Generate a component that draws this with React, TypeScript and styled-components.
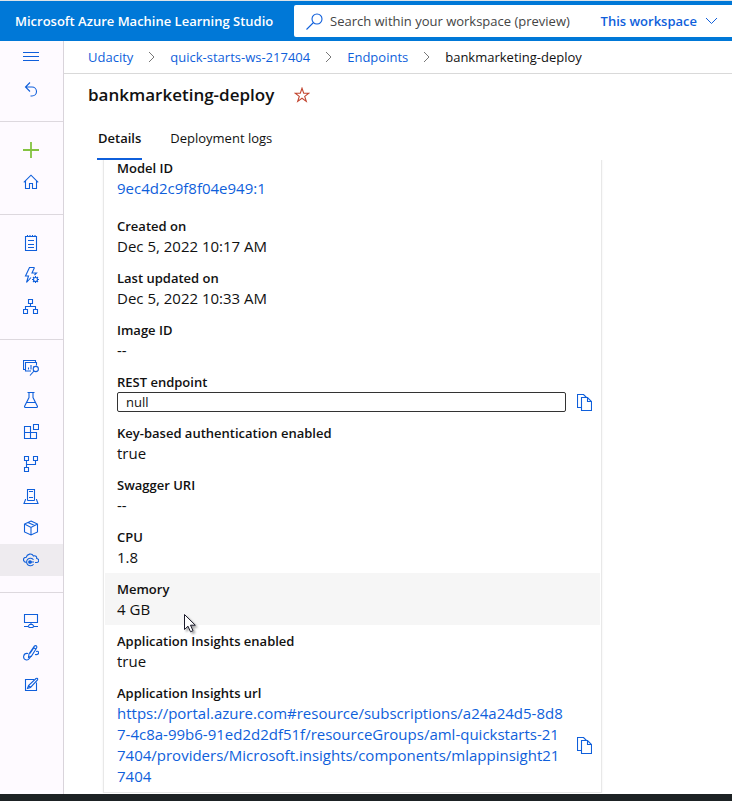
import React from "react";
import styled, { createGlobalStyle } from "styled-components";

const BLUE = "#0f5fdb";

const GlobalStyle = createGlobalStyle`
  *, *::before, *::after { box-sizing: border-box; }
  body {
    margin: 0;
    background: #fff;
    color: #111;
    font-family: "Open Sans", "Noto Sans", sans-serif;
    font-size: 13px;
    line-height: 20px;
  }
  button, input, select { font: inherit; color: inherit; }
  button { padding: 0; border: 0; background: none; cursor: pointer; }
  a { color: ${BLUE}; text-decoration: none; }
`;

const Page = styled.div`
  display: flex;
  flex-direction: column;
  min-height: 100vh;
`;

const Header = styled.header`
  display: flex;
  align-items: center;
  height: 41px;
  padding-left: 15px;
  border-top: 1px solid #dde3e8;
  background: #0078d7;
`;

const Brand = styled.span`
  flex: none;
  width: 279px;
  color: #fff;
  font-size: 13px;
  font-weight: 600;
  white-space: nowrap;
`;

const SearchBox = styled.div`
  display: flex;
  flex: 1;
  align-items: center;
  height: 32px;
  padding: 0 14px 0 12px;
  border-radius: 2px 0 0 2px;
  background: #fff;
`;

const SearchInput = styled.input`
  flex: 1;
  min-width: 0;
  margin-left: 7px;
  padding: 0;
  border: 0;
  outline: 0;
  background: none;
  &::placeholder { color: #444; opacity: 1; }
`;

const ScopeButton = styled.button`
  display: flex;
  align-items: center;
  gap: 8px;
  color: ${BLUE};
  font-weight: 600;
  white-space: nowrap;
`;

const Body = styled.div`
  display: flex;
  flex: 1;
`;

const Sidebar = styled.nav`
  flex: none;
  width: 64px;
  border-right: 1px solid #d9d4db;
  background: #fefaff;
`;

const NavGroup = styled.div`
  padding: 12px 0 16px;
  border-bottom: 1px solid #ddd8de;
  &:first-child { padding-top: 0; }
  &:last-child { border-bottom: 0; }
`;

const NavButton = styled.button<{ $active?: boolean }>`
  display: flex;
  align-items: center;
  width: 100%;
  height: 32px;
  padding-left: 23px;
  background: ${(p) => (p.$active ? "#eeebef" : "transparent")};
`;

const Main = styled.main`
  flex: 1;
  min-width: 0;
`;

const Breadcrumbs = styled.nav`
  display: flex;
  align-items: center;
  gap: 15px;
  height: 33px;
  padding-left: 24px;
  border-bottom: 1px solid #d9d9d9;
  white-space: nowrap;
`;

const TitleRow = styled.div`
  display: flex;
  align-items: center;
  gap: 20px;
  height: 44px;
  padding: 0 24px 2px;
`;

const Title = styled.h1`
  margin: 0;
  font-size: 17px;
  font-weight: 600;
  line-height: 24px;
`;

const Tabs = styled.div`
  display: flex;
  gap: 27px;
  height: 42px;
  padding-left: 33px;
`;

const Tab = styled.button<{ $active?: boolean }>`
  padding: 0 1px;
  border-bottom: 2px solid ${(p) => (p.$active ? BLUE : "transparent")};
  font-weight: ${(p) => (p.$active ? 600 : 400)};
`;

const ScrollArea = styled.div`
  overflow: hidden;
  padding: 0 24px 0 39px;
`;

const Card = styled.dl`
  max-width: 499px;
  margin: -9px 0 0;
  padding: 0 1px;
  border: 1px solid #e8e8e8;
  box-shadow: 0 0 2px #eee;
`;

const Row = styled.div<{ $hover?: boolean; $spaced?: boolean }>`
  position: relative;
  padding: 6px 8px 5px 12px;
  margin-bottom: ${(p) => (p.$spaced ? 6 : 0)}px;
  background: ${(p) => (p.$hover ? "#f6f6f6" : "transparent")};
`;

const Label = styled.dt`
  font-weight: 600;
`;

const Value = styled.dd`
  display: flex;
  align-items: center;
  gap: 11px;
  margin: 0;
  font-size: 15px;
  line-height: 21px;
`;

const UrlLink = styled.a`
  flex: 1;
  min-width: 0;
  word-break: break-all;
`;

const EndpointInput = styled.input`
  flex: 1;
  min-width: 0;
  height: 20px;
  padding: 0 8px;
  border: 1px solid #333;
  border-radius: 2px;
  background: #fff;
  font-size: 13px;
  outline: 0;
`;

const CopyButton = styled.button`
  display: flex;
  flex: none;
  width: 15px;
`;

const Pointer = styled.svg`
  position: absolute;
  top: 40px;
  left: 78px;
  pointer-events: none;
  filter: drop-shadow(2px 2px 1px rgba(0, 0, 0, 0.35));
`;

const BottomBar = styled.footer`
  height: 7px;
  background: #1d2224;
`;

const Glyph = styled.svg`
  display: block;
  flex: none;
  fill: none;
  stroke: ${BLUE};
  stroke-width: 1.1;
`;

const Icon = ({ children }: { children: React.ReactNode }) => (
  <Glyph width="16" height="16" viewBox="0 0 16 16" aria-hidden="true">
    {children}
  </Glyph>
);

const icons = {
  menu: <path d="M0 3.5h16M0 7.5h16M0 11.5h16" />,
  undo: <path d="M7 1.5 2.5 6 7 10.5M2.5 6H9a4.500 4.500 0 0 1 0 9H7.500" />,
  plus: <path stroke="#84c341" strokeWidth="1.800" d="M8 0v16M0 8h16" />,
  home: <path d="M.8 8.300 8 1.200l7.200 7.100M2.500 7v7.500h4v-5h3v5h4V7" />,
  notes: (
    <>
      <path d="M2.500 1.500h11v14h-11zM5 5.500h6M5 9.500h6M5 12.500h6" />
      <path d="M4.500 0v2M7 0v2M9.500 0v2M12 0v2" />
    </>
  ),
  automl: (
    <>
      <path d="M11.500.5h-5L2.500 9h3l-2 6.500 4.500-5M11.500.5 9 6h4.500l-2 2" />
      <circle cx="12.500" cy="12.500" r="2" />
      <path d="M12.500 9v1.500M12.500 14.500V16M9 12.500h1.500M14.500 12.500H16M10 10l1 1M14 14l1 1M15 10l-1 1M11 14l-1 1" />
    </>
  ),
  designer: (
    <path d="M5.500.5h4v4h-4zM.5 10.500h4v4h-4zM10.500 10.500h4v4h-4zM7.500 4.500v3M2.500 10.500v-3h10v3" />
  ),
  datasets: (
    <>
      <path d="M2.500 9.500h-2v-9h12v2M13.500 5.500v-3h-11v8.500H8M5.500 9.500V7.500M8 9.500V5M10.500 6.500V6" />
      <circle cx="12.800" cy="9" r="2.600" />
      <path d="m11 11-4 4.500" />
    </>
  ),
  flask: <path d="M4.500.5h7M6 .5v5l-4.500 9q0 1 1 1h11q1 0 1-1L10 5.500v-5M3.500 10.500h9" />,
  pipelines: (
    <path d="M1.500 2.500h6v6h-6zM1.500 8.500h6v6h-6zM7.500 8.500h6v6h-6zM10.500.5h5v5h-5z" />
  ),
  models: (
    <path d="M1.500.5h4v4h-4zM10.500.5h4v4h-4zM1.500 11.500h4v4h-4zM3.500 4.500v7M12.500 4.500v4h-9" />
  ),
  server: (
    <path d="M4.500 12.500V1.500h7v11M3 11.500h-.5L1 15.500h14l-1.500-4H13M6 3.500h4M6 9.500h4M4.500 12.500h7" />
  ),
  cube: <path d="m8 1 6.500 3v8L8 15l-6.500-3V4zM1.500 4 8 7.500 14.500 4M8 7.500V15M5 2.500l6.500 3" />,
  cloud: (
    <>
      <path d="M3.500 10.500C-.5 10-.5 5.500 3.200 5.300 4 1.800 8.800.8 10.500 4c2-.8 3.500.7 3.200 2.500 3 .5 2.500 4-.2 4H12" />
      <path d="M10.500 7.800a3.800 3.800 0 1 0 0 4.400M6 10h5" />
      <circle cx="7" cy="10" r="1.300" fill={BLUE} />
    </>
  ),
  compute: (
    <path d="M1.500 1.500h13v8h-13zM8 9.500v2M1 13.500h4L6.500 11.500h3l1.500 2h4M5 13.500l1.500 1h3l1.500-1" />
  ),
  linked: (
    <>
      <path d="M5.500 12.500 6 9l5-7.500q1.500-1.500 2.500-.5.800 1-.2 2.500L8.500 11zM10.500 2.500l2.200 1.500M7 8.500l4-6" />
      <path d="M5 8.500c-5-.8-6 5.500-1.500 6.500 3 .4 2.500-2.500 5-4M12 9.500c3 .5 4-1 3.500-2.500Q15 5.800 13 6.500" />
    </>
  ),
  edit: (
    <>
      <path d="M11 2.500H2.500v11h11V5.500" />
      <path d="m4.500 11.500 1-3 7.500-7q1-.5 1.500 0t0 1.500L7.500 10.500zM5.500 8.500l2 2" />
    </>
  ),
};

type IconName = keyof typeof icons;

const navGroups: { name: IconName; label: string; active?: boolean }[][] = [
  [
    { name: "menu", label: "Menu" },
    { name: "undo", label: "Back" },
  ],
  [
    { name: "plus", label: "New" },
    { name: "home", label: "Home" },
  ],
  [
    { name: "notes", label: "Notebooks" },
    { name: "automl", label: "Automated ML" },
    { name: "designer", label: "Designer" },
  ],
  [
    { name: "datasets", label: "Data" },
    { name: "flask", label: "Jobs" },
    { name: "pipelines", label: "Components" },
    { name: "models", label: "Pipelines" },
    { name: "server", label: "Environments" },
    { name: "cube", label: "Models" },
    { name: "cloud", label: "Endpoints", active: true },
  ],
  [
    { name: "compute", label: "Compute" },
    { name: "linked", label: "Linked services" },
    { name: "edit", label: "Data labeling" },
  ],
];

const Chevron = () => (
  <Glyph width="7" height="12" viewBox="0 0 7 12" aria-hidden="true">
    <path stroke="#777" strokeWidth="1" d="m1 1 5 5-5 5" />
  </Glyph>
);

const Copy = ({ label }: { label: string }) => (
  <CopyButton type="button" aria-label={label}>
    <Glyph width="15" height="17" viewBox="0 0 15 17" aria-hidden="true">
      <path d="M4.500 13.500h-4V.5h6l3 3M4.500 3.500h6l4 4v9h-10zM10.500 3.500v4h4" />
    </Glyph>
  </CopyButton>
);

const Field = ({
  label,
  children,
  spaced,
}: {
  label: string;
  children: React.ReactNode;
  spaced?: boolean;
}) => (
  <Row $spaced={spaced}>
    <Label>{label}</Label>
    <Value>{children}</Value>
  </Row>
);

export default function App() {
  return (
    <Page>
      <GlobalStyle />
      <Header>
        <Brand>Microsoft Azure Machine Learning Studio</Brand>
        <SearchBox>
          <Glyph width="17" height="17" viewBox="0 0 17 17" aria-hidden="true">
            <circle cx="11" cy="6" r="5" />
            <path d="M7.500 9.500.5 16.500" />
          </Glyph>
          <SearchInput
            aria-label="Search"
            placeholder="Search within your workspace (preview)"
          />
          <ScopeButton type="button">
            This workspace
            <Glyph width="13" height="8" viewBox="0 0 13 8" aria-hidden="true">
              <path strokeWidth="1" d="m1 1 5.500 5.500L12 1" />
            </Glyph>
          </ScopeButton>
        </SearchBox>
      </Header>
      <Body>
        <Sidebar aria-label="Studio">
          {navGroups.map((group) => (
            <NavGroup key={group[0].name}>
              {group.map((item) => (
                <NavButton
                  key={item.name}
                  type="button"
                  aria-label={item.label}
                  $active={item.active}
                >
                  <Icon>{icons[item.name]}</Icon>
                </NavButton>
              ))}
            </NavGroup>
          ))}
        </Sidebar>
        <Main>
          <Breadcrumbs aria-label="Breadcrumb">
            <a href="#udacity">Udacity</a>
            <Chevron />
            <a href="#workspace">quick-starts-ws-217404</a>
            <Chevron />
            <a href="#endpoints">Endpoints</a>
            <Chevron />
            <span>bankmarketing-deploy</span>
          </Breadcrumbs>
          <TitleRow>
            <Title>bankmarketing-deploy</Title>
            <button type="button" aria-label="Favorite">
              <Glyph width="16" height="16" viewBox="0 0 16 16" aria-hidden="true">
                <path
                  stroke="#c2452f"
                  d="m8 1.200 1.700 5h5.200l-4.200 3.200 1.600 5L8 11.300l-4.300 3.100 1.600-5L1.100 6.200h5.200z"
                />
              </Glyph>
            </button>
          </TitleRow>
          <Tabs role="tablist">
            <Tab type="button" role="tab" aria-selected="true" $active>
              Details
            </Tab>
            <Tab type="button" role="tab" aria-selected="false">
              Deployment logs
            </Tab>
          </Tabs>
          <ScrollArea>
            <Card>
              <Field label="Model ID" spaced>
                <a href="#model">9ec4d2c9f8f04e949:1</a>
              </Field>
              <Field label="Created on">Dec 5, 2022 10:17 AM</Field>
              <Field label="Last updated on">Dec 5, 2022 10:33 AM</Field>
              <Field label="Image ID">--</Field>
              <Row>
                <Label>
                  <label htmlFor="rest-endpoint">REST endpoint</label>
                </Label>
                <Value>
                  <EndpointInput id="rest-endpoint" readOnly value="null" />
                  <Copy label="Copy REST endpoint" />
                </Value>
              </Row>
              <Field label="Key-based authentication enabled">true</Field>
              <Field label="Swagger URI">--</Field>
              <Field label="CPU">1.8</Field>
              <Row $hover>
                <Label>Memory</Label>
                <Value>4 GB</Value>
                <Pointer width="14" height="21" viewBox="0 0 14 21" aria-hidden="true">
                  <path
                    d="M1.500 1.500v15l3.500-3.300 2.500 5.600 2.500-1.100-2.500-5.500h4.800z"
                    fill="#fff"
                    stroke="#1a1a2a"
                  />
                </Pointer>
              </Row>
              <Field label="Application Insights enabled">true</Field>
              <Field label="Application Insights url">
                <UrlLink href="#insights">
                  https://portal.azure.com#resource/subscriptions/a24a24d5-8d87-4c8a-99b6-91ed2d2df51f/resourceGroups/aml-quickstarts-217404/providers/Microsoft.insights/components/mlappinsight217404
                </UrlLink>
                <Copy label="Copy Application Insights url" />
              </Field>
            </Card>
          </ScrollArea>
        </Main>
      </Body>
      <BottomBar />
    </Page>
  );
}
